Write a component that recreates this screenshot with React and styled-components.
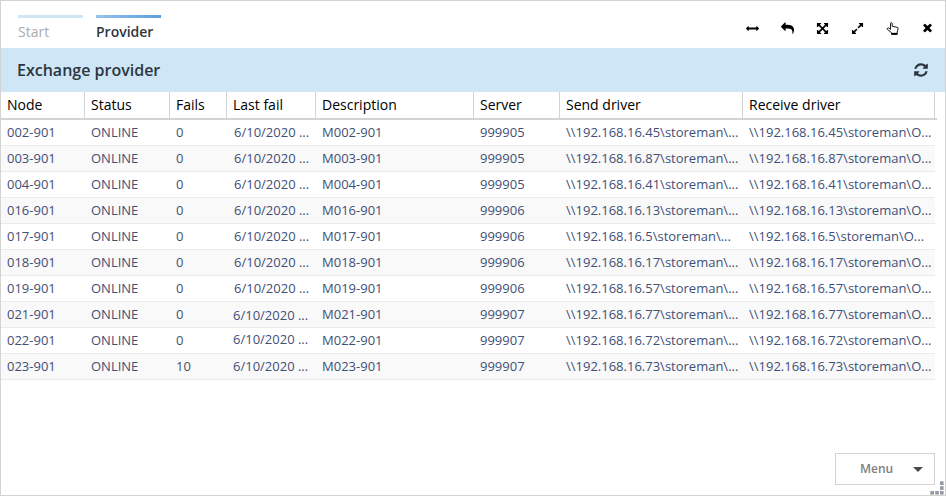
import React from "react";
import styled, { createGlobalStyle } from "styled-components";

const GlobalStyle = createGlobalStyle`
  * { box-sizing: border-box; }
  body { margin: 0; background: #fff; font-family: "Open Sans", "Noto Sans", sans-serif; }
`;

const Window = styled.div`
  position: relative;
  display: flex;
  flex-direction: column;
  width: 946px;
  height: 496px;
  border: 1px solid #d3d3d3;
  background: #fff;
  overflow: hidden;
`;

const TopBar = styled.header`
  display: flex;
  justify-content: space-between;
  height: 47px;
  flex: none;
  padding: 14px 10px 0 17px;
`;

const Tabs = styled.nav`
  display: flex;
  gap: 13px;
`;

const Tab = styled.div`
  width: 65px;
  height: 30px;
  font-size: 14px;
  line-height: 20px;
  white-space: nowrap;
  font-weight: ${(p) => (p.$active ? 600 : 400)};
  color: ${(p) => (p.$active ? "#2c3640" : "#a9adb1")};

  &::before {
    content: "";
    display: block;
    height: 3px;
    margin-bottom: 4px;
    background: ${(p) => (p.$active ? "linear-gradient(90deg, #95c3ec, #5c9fdc)" : "#cfe6f7")};
  }
`;

const Tools = styled.div`
  display: flex;
  gap: 20px;
  height: 26px;
  align-items: center;
  color: #000;
`;

const Tool = styled.span`
  display: flex;
  align-items: center;
  justify-content: center;
  width: 15px;
  height: 14px;
`;

const Glyph = styled.svg`
  display: block;
  flex: none;
  width: ${(p) => p.$size}px;
  height: ${(p) => p.$size}px;
  fill: currentColor;
`;

const Hand = styled.svg`
  display: block;
  flex: none;
  width: 13px;
  height: 13px;
  fill: none;
  stroke: currentColor;
  stroke-width: 0.9;
  stroke-linejoin: round;
`;

const TitleBar = styled.div`
  display: flex;
  align-items: center;
  justify-content: space-between;
  height: 44px;
  flex: none;
  padding: 0 16px;
  background: #cfe6f7;
  color: #2c3640;
`;

const Title = styled.h1`
  margin: 0;
  font-size: 16px;
  font-weight: 600;
  line-height: 22px;
`;

const Grid = styled.div`
  flex: 1;
`;

const columns = "84px 85px 57px 89px 158px 86px 183px 192px";

const HeadRow = styled.div`
  display: grid;
  grid-template-columns: ${columns};
  width: 936px;
  height: 28px;
  border-bottom: 2px solid #d3d3d3;
`;

const HeadCell = styled.div`
  padding-left: 6px;
  border-right: 1px solid #d3d3d3;
  color: #000;
  font-size: 14px;
  line-height: 26px;
  white-space: nowrap;
`;

const Row = styled.div`
  display: grid;
  grid-template-columns: ${columns};
  width: 934px;
  height: 26px;
  border-bottom: 1px solid #ebebeb;
  background: ${(p) => (p.$striped ? "#f9f9f9" : "#fff")};
`;

const Cell = styled.div`
  padding-left: 6px;
  color: #414f76;
  font-size: 13px;
  line-height: 25px;
  height: 25px;
  white-space: nowrap;
`;

const DateCell = styled(Cell)`
  padding-left: ${(p) => (p.$late ? 6 : 7)}px;
  line-height: ${(p) => 25 + p.$shift * 2}px;
`;

const MenuButton = styled.button`
  display: flex;
  align-items: center;
  align-self: flex-end;
  justify-content: space-between;
  flex: none;
  width: 100px;
  height: 32px;
  margin: 0 10px 10px 0;
  padding: 0 11px 1px 24px;
  border: 1px solid #d3d3d3;
  background: #fff;
  color: #808080;
  font-family: inherit;
  font-size: 12px;
  font-weight: 600;
`;

const Caret = styled.span`
  border: 5px solid transparent;
  border-top-color: #4a4a4a;
  border-bottom: 0;
  margin-top: 1px;
`;

const Grip = styled.svg`
  position: absolute;
  right: 1px;
  bottom: 0;
  width: 14px;
  height: 14px;
  fill: #949aa3;
`;

const paths = {
  horizontal:
    "M1792 896q0 26-19 45l-256 256q-19 19-45 19t-45-19-19-45v-128h-1024v128q0 26-19 45t-45 19-45-19l-256-256q-19-19-19-45t19-45l256-256q19-19 45-19t45 19 19 45v128h1024v-128q0-26 19-45t45-19 45 19l256 256q19 19 19 45z",
  reply:
    "M1792 1120q0 166-127 451-3 7-10.5 24t-13.5 30-13 22q-12 17-28 17-15 0-23.5-10t-8.5-25q0-9 2.5-26.5t2.5-23.5q5-68 5-123 0-101-17.5-181t-48.5-138.5-80-101-105.5-69.5-133-42.5-154-21.5-175.5-6h-224v256q0 26-19 45t-45 19-45-19l-512-512q-19-19-19-45t19-45l512-512q19-19 45-19t45 19 19 45v256h224q713 0 875 403 53 134 53 333z",
  arrows:
    "M1411 541l-355 355 355 355 144-144q29-31 70-14 39 17 39 59v448q0 26-19 45t-45 19h-448q-42 0-59-40-17-39 14-69l144-144-355-355-355 355 144 144q31 30 14 69-17 40-59 40h-448q-26 0-45-19t-19-45v-448q0-42 40-59 39-17 69 14l144 144 355-355-355-355-144 144q-19 19-45 19-12 0-24-5-40-17-40-59v-448q0-26 19-45t45-19h448q42 0 59 40 17 39-14 69l-144 144 355 355 355-355-144-144q-31-30-14-69 17-40 59-40h448q26 0 45 19t19 45v448q0 42-39 59-13 5-25 5-26 0-45-19z",
  expand:
    "M883 1056q0 13-10 23l-332 332 144 144q19 19 19 45t-19 45-45 19h-448q-26 0-45-19t-19-45v-448q0-26 19-45t45-19 45 19l144 144 332-332q10-10 23-10t23 10l114 114q10 10 10 23zm781-864v448q0 26-19 45t-45 19-45-19l-144-144-332 332q-10 10-23 10t-23-10l-114-114q-10-10-10-23t10-23l332-332-144-144q-19-19-19-45t19-45 45-19h448q26 0 45 19t19 45z",
  close:
    "M1490 1322q0 40-28 68l-136 136q-28 28-68 28t-68-28l-294-294-294 294q-28 28-68 28t-68-28l-136-136q-28-28-28-68t28-68l294-294-294-294q-28-28-28-68t28-68l136-136q28-28 68-28t68 28l294 294 294-294q28-28 68-28t68 28l136 136q28 28 28 68t-28 68l-294 294 294 294q28 28 28 68z",
  refresh:
    "M1639 1056q0 5-1 7-64 268-268 434.5t-478 166.5q-146 0-282.5-55t-243.5-157l-129 129q-19 19-45 19t-45-19-19-45v-448q0-26 19-45t45-19h448q26 0 45 19t19 45-19 45l-137 137q71 66 161 102t187 36q134 0 250-65t186-179q11-17 53-117 8-23 30-23h192q13 0 22.5 9.5t9.5 22.5zm25-800v448q0 26-19 45t-45 19h-448q-26 0-45-19t-19-45 19-45l138-138q-148-137-349-137-134 0-250 65t-186 179q-11 17-53 117-8 23-30 23h-199q-13 0-22.5-9.5t-9.5-22.5v-7q65-268 270-434.5t480-166.5q146 0 284 55.5t245 156.5l130-129q19-19 45-19t45 19 19 45z",
};

const Icon = ({ name, size = 14, box = "0 0 1792 1792" }) => (
  <Glyph viewBox={box} $size={size} aria-hidden="true">
    <path d={paths[name]} />
  </Glyph>
);

const headings = ["Node", "Status", "Fails", "Last fail", "Description", "Server", "Send driver", "Receive driver"];

const rows = [
  { node: "002", fails: 0, server: "999905", host: "45" },
  { node: "003", fails: 0, server: "999905", host: "87" },
  { node: "004", fails: 0, server: "999905", host: "41" },
  { node: "016", fails: 0, server: "999906", host: "13" },
  { node: "017", fails: 0, server: "999906", host: "5" },
  { node: "018", fails: 0, server: "999906", host: "17" },
  { node: "019", fails: 0, server: "999906", host: "57" },
  { node: "021", fails: 0, server: "999907", host: "77", late: true, shift: 1 },
  { node: "022", fails: 0, server: "999907", host: "72", late: true, shift: -1 },
  { node: "023", fails: 10, server: "999907", host: "73", late: true },
];

export default function App() {
  return (
    <>
      <GlobalStyle />
      <Window>
        <TopBar>
          <Tabs>
            <Tab>Start</Tab>
            <Tab $active>Provider</Tab>
          </Tabs>
          <Tools>
            <Tool><Icon name="horizontal" size={13} /></Tool>
            <Tool><Icon name="reply" size={13} /></Tool>
            <Tool><Icon name="arrows" size={13} /></Tool>
            <Tool><Icon name="expand" size={13} /></Tool>
            <Tool>
              <Hand viewBox="0 0 13 13" aria-hidden="true">
                <path d="M4.5 7.5V1.5Q4.5.6 5.3.6T6.2 1.5V4.3L11 5.3Q12.2 5.6 12.1 6.8L11.2 10v2.4H5.5V10.7L1.4 7.5Q.8 6.7 1.5 6.1t1.6.1L4.5 7.5" />
                <path d="M5.5 11.7h5.7" strokeWidth="1.7" />
              </Hand>
            </Tool>
            <Tool><Icon name="close" size={13} box="0 132 1792 1792" /></Tool>
          </Tools>
        </TopBar>
        <TitleBar>
          <Title>Exchange provider</Title>
          <Icon name="refresh" size={16} />
        </TitleBar>
        <Grid>
          <HeadRow>
            {headings.map((h) => <HeadCell key={h}>{h}</HeadCell>)}
          </HeadRow>
          {rows.map((r, i) => (
            <Row key={r.node} $striped={i % 2 === 1}>
              <Cell>{r.node}-901</Cell>
              <Cell>ONLINE</Cell>
              <Cell>{r.fails}</Cell>
              <DateCell $late={r.late} $shift={r.shift || 0}>6/10/2020 ...</DateCell>
              <Cell>M{r.node}-901</Cell>
              <Cell>{r.server}</Cell>
              <Cell>{`\\\\192.168.16.${r.host}\\storeman\\...`}</Cell>
              <Cell>{`\\\\192.168.16.${r.host}\\storeman\\O...`}</Cell>
            </Row>
          ))}
        </Grid>
        <MenuButton>Menu<Caret /></MenuButton>
        <Grip viewBox="0 0 14 14">
          <rect x="10" y="0.3" width="3.6" height="3.7" />
          <rect x="10" y="5.2" width="3.6" height="3.7" />
          <rect x="0.4" y="10" width="3.6" height="3.6" />
          <rect x="5.2" y="10" width="3.6" height="3.6" />
          <rect x="10" y="10" width="3.6" height="3.6" />
        </Grip>
      </Window>
    </>
  );
}
